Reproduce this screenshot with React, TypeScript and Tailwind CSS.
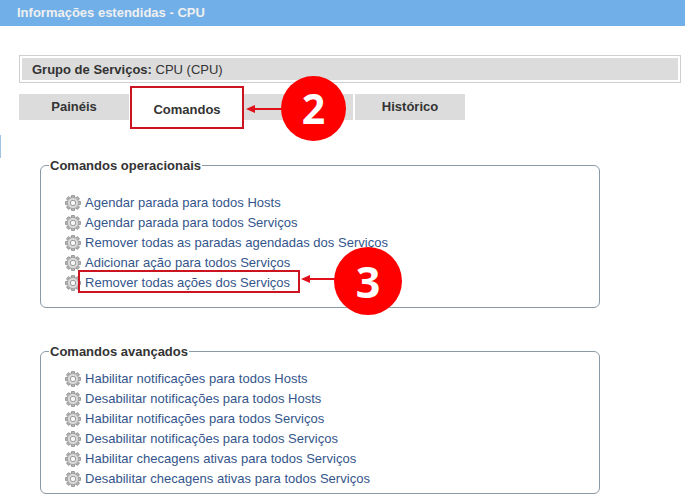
const operacionais = [
  'Agendar parada para todos Hosts',
  'Agendar parada para todos Serviços',
  'Remover todas as paradas agendadas dos Serviços',
  'Adicionar ação para todos Serviços',
  'Remover todas ações dos Serviços',
]

const avancados = [
  'Habilitar notificações para todos Hosts',
  'Desabilitar notificações para todos Hosts',
  'Habilitar notificações para todos Serviços',
  'Desabilitar notificações para todos Serviços',
  'Habilitar checagens ativas para todos Serviços',
  'Desabilitar checagens ativas para todos Serviços',
]

function Gear() {
  const teeth = [0, 45, 90, 135, 180, 225, 270, 315]
  return (
    <svg width="16" height="16" viewBox="0 0 16 16" className="shrink-0">
      {teeth.map(a => (
        <rect key={a} x="6.4" y="0.4" width="3.2" height="15.2" rx="0.8" fill="#b4b4b4" stroke="#858585" strokeWidth="0.5" transform={`rotate(${a} 8 8)`} />
      ))}
      <circle cx="8" cy="8" r="5.6" fill="#dadada" stroke="#929292" strokeWidth="0.6" />
      <circle cx="8" cy="8" r="2.7" fill="#fafafa" stroke="#888" strokeWidth="0.8" />
    </svg>
  )
}

function Panel({ title, items, className }: { title: string; items: string[]; className: string }) {
  return (
    <fieldset className={`ml-10 w-[560px] border border-[#8a99a3] rounded-[6px] px-[8px] ${className}`}>
      <legend className="text-[13px] font-bold leading-[15px] text-[#333] px-[1px]">{title}</legend>
      <ul className="pl-[16px]">
        {items.map(t => (
          <li key={t} className="flex items-center gap-[4px] h-5">
            <Gear />
            <a className="text-[13px] tracking-[0.02px] text-[#34558b]">{t}</a>
          </li>
        ))}
      </ul>
    </fieldset>
  )
}

function Badge({ n, className }: { n: string; className: string }) {
  return (
    <div className={`absolute rounded-full bg-[#fe0000] text-white font-bold font-['Open_Sans',sans-serif] leading-none flex items-center justify-center ${className}`}>
      {n}
    </div>
  )
}

function Arrow({ className, width }: { className: string; width: number }) {
  return (
    <svg width={width} height="10" viewBox={`0 0 ${width} 10`} className={`absolute ${className}`}>
      <path d={`M0 5 L9 1 L9 4 L${width} 4 L${width} 6 L9 6 L9 9 Z`} fill="#e0101a" />
    </svg>
  )
}

export default function App() {
  return (
    <div className="relative w-[686px] h-[498px] overflow-hidden bg-white font-['Liberation_Sans',Arial,sans-serif]">
      <div className="h-[26px] mr-px bg-[#70afe7] pl-[17px] text-[13px] font-bold leading-[26px] text-[#f0f0f0]">
        Informações estendidas - CPU
      </div>

      <div className="mt-[29px] ml-[19px] mr-[5px] border border-[#cfcfcf] p-[2px]">
        <div className="h-[22px] bg-[#dcdcdc] pl-[10px] text-[13px] leading-[23px] text-[#333]">
          <b>Grupo de Serviços:</b> CPU (CPU)
        </div>
      </div>

      <div className="mt-[11px] ml-[19px] flex gap-[2px] text-[13px] font-bold text-[#333]">
        <div className="w-[110px] h-[26px] bg-[#dcdcdc] flex justify-center pt-[3px]">Painéis</div>
        <div className="w-[110px] h-[26px]" />
        <div className="w-[110px] h-[26px] bg-[#dcdcdc]" />
        <div className="w-[110px] h-[26px] bg-[#dcdcdc] flex justify-center pt-[3px]">Histórico</div>
      </div>

      <div className="absolute left-0 top-[135px] w-px h-[23px] bg-[#9fc3e4]" />

      <Panel title="Comandos operacionais" items={operacionais} className="mt-[38px] h-[150px] pt-[20px]" />
      <Panel title="Comandos avançados" items={avancados} className="mt-[36px] h-[150px] pt-[10px]" />

      <div className="absolute left-[130px] top-[86px] w-[114px] h-[43px] bg-white border-2 border-[#cc1420] flex items-center justify-center pt-[5px] text-[13px] font-bold text-[#333]">
        Comandos
      </div>
      <Arrow className="left-[246px] top-[104px]" width={38} />
      <Badge n="2" className="left-[281px] top-[76px] w-[65px] h-[65px] text-[41px]" />

      <div className="absolute left-[78px] top-[270px] w-[222px] h-[23px] border-2 border-[#cc1420]" />
      <Arrow className="left-[301px] top-[274px]" width={35} />
      <Badge n="3" className="left-[334px] top-[247px] w-[68px] h-[68px] text-[43px]" />
    </div>
  )
}
